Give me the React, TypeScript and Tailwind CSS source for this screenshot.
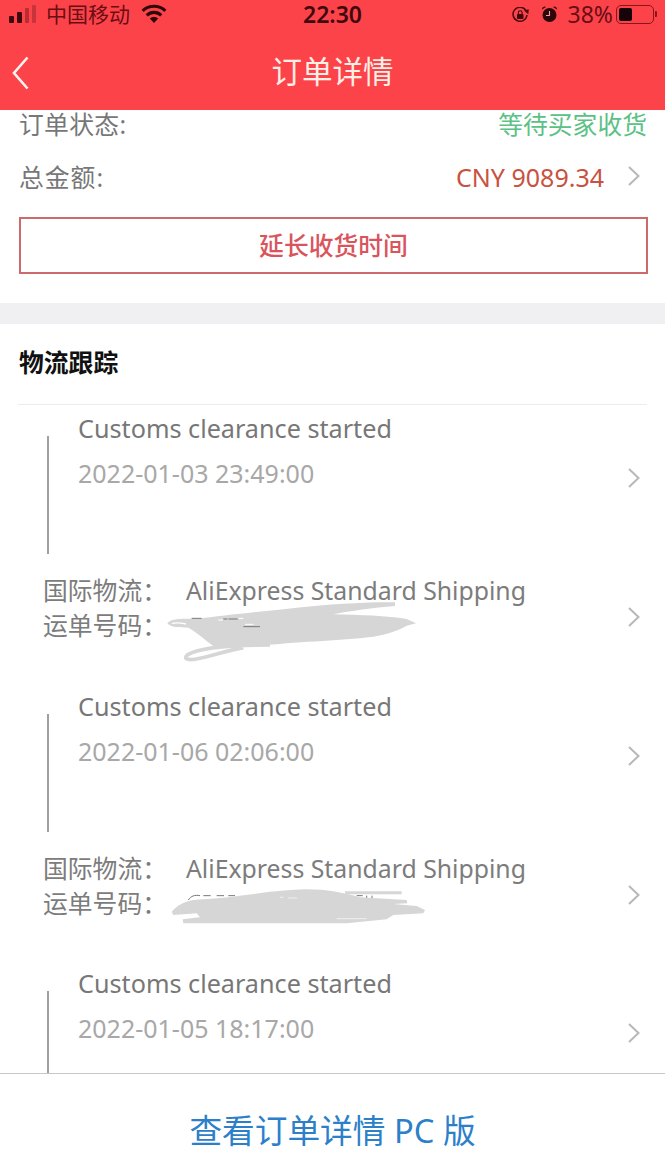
import React from "react";

const cjk = "font-['Noto_Sans','Noto_Sans_CJK_SC',sans-serif]";

function Chevron({ className = "" }: { className?: string }) {
  return (
    <svg width="14" height="22" viewBox="0 0 14 22" fill="none" className={className}>
      <path d="M2 2l9.500 9L2 20" stroke="#b8b8b8" strokeWidth="2" />
    </svg>
  );
}

function StatusBar() {
  return (
    <div className="relative flex h-[28px] items-center pl-[9px] pr-[8px] text-[#5c0a12]">
      <div className="flex h-[18px] items-end gap-[3px]">
        <span className="h-[7px] w-[5px] rounded-[1px] bg-[#3f0a0f]" />
        <span className="h-[11px] w-[5px] rounded-[1px] bg-[#3f0a0f]" />
        <span className="h-[15px] w-[4px] rounded-[1px] bg-[#b92c32]" />
        <span className="h-[18px] w-[4px] rounded-[1px] bg-[#c9343a]" />
      </div>
      <span className="ml-[10px] text-[21px] leading-none text-[#6a0d14]">中国移动</span>
      <svg width="26" height="20" viewBox="0 0 28 22" className="ml-[11px]">
        <path d="M1.500 7.500a18 18 0 0 1 25 0" fill="none" stroke="#2e070a" strokeWidth="3.400" />
        <path d="M6 12.500a11.500 11.500 0 0 1 16 0" fill="none" stroke="#2e070a" strokeWidth="3.400" />
        <path d="M14 21l-4.600-5a6.600 6.600 0 0 1 9.200 0z" fill="#2e070a" />
      </svg>
      <span className="absolute left-[303px] text-[23px] font-semibold leading-none text-[#3f0a0f]">22:30</span>
      <div className="ml-auto flex items-center">
        <svg width="18" height="16" viewBox="0 0 18 16" className="mr-[11px] mt-[1px]">
          <path d="M13.800 3.300A7 7 0 1 0 15 8" fill="none" stroke="#4a0b10" strokeWidth="1.500" />
          <path d="M12 3.500l4.800-1.200-.5 5z" fill="#4a0b10" />
          <rect x="5" y="7" width="6.500" height="5" rx="1" fill="#3f0a0f" />
          <path d="M6.400 7V5.600a1.800 1.800 0 0 1 3.700 0V7" fill="none" stroke="#3f0a0f" strokeWidth="1.100" />
        </svg>
        <svg width="17" height="18" viewBox="0 0 17 18" className="mr-[10px]">
          <circle cx="8.500" cy="10" r="7" fill="#2e070a" />
          <path d="M1 4.500a2.600 2.600 0 0 1 4-2.500zM16 4.500a2.600 2.600 0 0 0-4-2.500z" fill="#2e070a" />
          <path d="M8.500 6v4.500H5" fill="none" stroke="#e8a0a0" strokeWidth="1.100" />
        </svg>
        <span className="text-[23px] leading-none text-[#6a0d14]">38%</span>
        <div className="ml-[3px] flex h-[19px] w-[38px] items-center rounded-[5px] border border-[#8a161c] p-[2px]">
          <span className="h-full w-[13px] rounded-[2px] bg-[#16040a]" />
        </div>
        <span className="ml-[1px] h-[6px] w-[2px] rounded-r-[1px] bg-[#8a161c]" />
      </div>
    </div>
  );
}

function NavBar() {
  return (
    <div className="relative flex h-[82px] items-center justify-center pt-[4px]">
      <svg width="18" height="34" viewBox="0 0 18 34" fill="none" className="absolute left-[12px] top-[28px]">
        <path d="M15.500 1.500L2 17l13.500 15.500" stroke="#fff4f0" strokeWidth="2.600" />
      </svg>
      <span className="text-[30.500px] leading-none text-[#fdeee6]">订单详情</span>
    </div>
  );
}

// Hand-drawn strokes that hide the first waybill number
function ScribbleOne() {
  return (
    <svg width="270" height="75" viewBox="0 0 810 225" className="absolute left-[160px] top-[595px]">
      <path
        d="M22 85C30 72 60 70 110 72C200 60 300 50 440 35C540 25 650 20 705 22L705 33C640 38 570 48 520 58C600 60 680 62 740 72L768 85L740 92C720 105 680 118 640 125C560 135 420 140 320 150L170 158C150 150 130 125 85 98C60 96 35 100 22 85Z"
        fill="#d6d6d6"
      />
      <path d="M36 85C50 82 65 84 78 87" fill="none" stroke="#fff" strokeWidth="4" />
      <path
        d="M330 150C220 150 120 158 85 178C65 192 85 198 120 190C170 178 210 165 250 158"
        fill="none"
        stroke="#d6d6d6"
        strokeWidth="11"
      />
      <path d="M95 70h30M190 72h12M205 72h28M250 95h50" fill="none" stroke="#777" strokeWidth="3" />
      <path d="M175 75h14M236 70h14M255 88h26" fill="none" stroke="#fff" strokeWidth="3" />
    </svg>
  );
}

// Same treatment for the second waybill number
function ScribbleTwo() {
  return (
    <svg width="270" height="50" viewBox="0 0 810 150" className="absolute left-[160px] top-[880px]">
      <path d="M85 60C92 48 105 44 120 47M130 47h22M170 47h22M205 47h20M570 47v12M590 47h18M620 47v12M636 47v12" fill="none" stroke="#777" strokeWidth="3" />
      <path
        d="M35 95C60 68 90 58 130 58C250 50 350 28 440 28C500 28 550 38 600 52L740 60L742 70L700 72L770 78L795 90L790 100L700 105L680 118L560 130L70 130L68 118L120 112L110 100L40 105Z"
        fill="#d6d6d6"
      />
      <path d="M555 38h170" fill="none" stroke="#d6d6d6" strokeWidth="9" />
      <path d="M360 52h10M385 54h26M530 116h90" fill="none" stroke="#efefef" strokeWidth="3" />
    </svg>
  );
}

function TrackingEntry({ date, compact }: { date: string; compact?: boolean }) {
  return (
    <div className="h-[277.500px]">
      <div className="flex h-[168px] items-start">
        <div className="ml-[47px] mt-[31px] h-[118px] w-[2px] bg-[#a0a0a0]" />
        <div className="ml-[30px] flex flex-col pt-[5px]">
          <span className="-ml-px h-[45px] text-[25.200px] leading-[36px] text-[#777777]">Customs clearance started</span>
          <span className="-ml-px text-[25px] leading-[36px] text-[#a8a8a8]">{date}</span>
        </div>
        <Chevron className="ml-auto mr-[24px] mt-[62px] shrink-0" />
      </div>
      {!compact && (
        <div className="flex items-start pl-[43px] text-[24.800px] leading-[35px] text-[#7c7c7c]">
          <div className="flex w-[143px] shrink-0 flex-col">
            <span>国际物流：</span>
            <span>运单号码：</span>
          </div>
          <span>AliExpress Standard Shipping</span>
          <Chevron className="ml-auto mr-[24px] mt-[33px] shrink-0" />
        </div>
      )}
    </div>
  );
}

export default function App() {
  return (
    <div className={`relative flex h-[1150px] w-[665px] flex-col overflow-hidden bg-white ${cjk}`}>
      <header className="h-[110px] shrink-0 bg-[#fd434a]">
        <StatusBar />
        <NavBar />
      </header>

      <main className="flex min-h-0 flex-1 flex-col">
        <section className="shrink-0 px-[18px]">
          <div className="flex h-[29px] items-center justify-between pl-[1px] text-[24.800px] leading-none">
            <span className="tracking-[0.3px] text-[#777777]">订单状态:</span>
            <span className="text-[#5cc185]">等待买家收货</span>
          </div>
          <div className="mt-[24px] flex h-[29px] items-center pl-[1px] text-[24.800px] leading-none">
            <span className="tracking-[1px] text-[#777777]">总金额:</span>
            <span className="ml-auto text-[25px] text-[#c9523f]">CNY 9089.34</span>
            <Chevron className="-mt-[4px] ml-[23px] mr-[6px]" />
          </div>
          <button className="ml-[1px] mt-[25px] flex h-[57px] w-[629px] items-center justify-center border-2 border-[#cf6a6c] text-[24.800px] font-medium leading-none text-[#d9545c]">
            延长收货时间
          </button>
        </section>

        <div className="mt-[29px] h-[21px] shrink-0 bg-[#f0f0f2]" />

        <section className="flex min-h-0 flex-1 flex-col">
          <h2 className="flex h-[80px] shrink-0 items-center pb-[3px] pl-[19px] text-[24.800px] font-bold leading-none text-[#111111]">物流跟踪</h2>
          <div className="mx-[18px] h-px shrink-0 bg-[#ececec]" />
          <div className="min-h-0 flex-1 overflow-hidden">
            <TrackingEntry date="2022-01-03 23:49:00" />
            <TrackingEntry date="2022-01-06 02:06:00" />
            <TrackingEntry date="2022-01-05 18:17:00" compact />
          </div>
        </section>
      </main>

      <ScribbleOne />
      <ScribbleTwo />

      <footer className="flex h-[77px] shrink-0 items-start justify-center border-t border-[#c8c8c8] bg-white pt-[41px] text-[32.700px] leading-none text-[#2c7fc9]">
        查看订单详情 PC 版
      </footer>
    </div>
  );
}
